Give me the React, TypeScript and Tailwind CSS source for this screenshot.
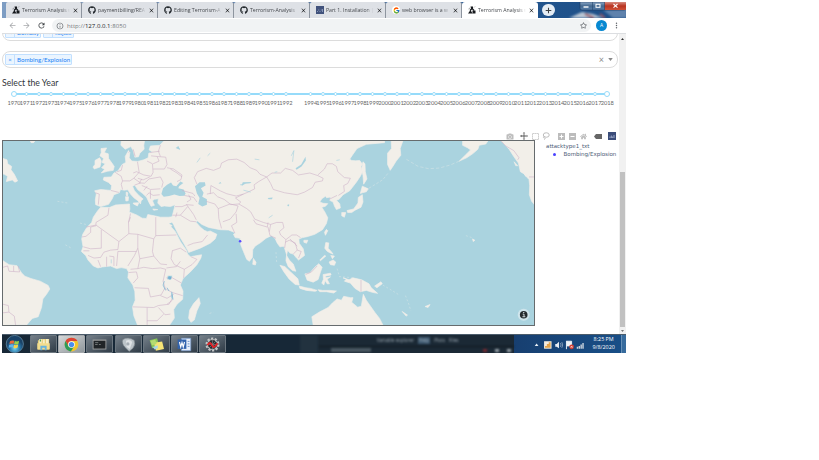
import React from "react";
import { FcGoogle } from "react-icons/fc";
import { FaGithub, FaCamera, FaHome, FaRegStar } from "react-icons/fa";
import { MdClose, MdArrowBack, MdArrowForward, MdRefresh, MdInfoOutline, MdMoreVert } from "react-icons/md";

/* ---------- browser chrome ---------- */

function DashIcon() {
  return (
    <svg viewBox="0 0 16 16" className="h-full w-full">
      <path d="M0 15 5 8l4 7zM9 9h6v6H9zM5 1h5v4l3 3-2 1-3-2-3 3-2-2 3-3z" fill="#16191d" />
      <path d="M1 6l3-2M12 3l2-2" stroke="#444" />
    </svg>
  );
}

function DocsIcon() {
  return (
    <svg viewBox="0 0 16 16" className="h-full w-full">
      <rect width="16" height="16" fill="#41527c" />
      <path d="M3 10v2M5.500 7v2M8 10v2M10.500 7v2M13 6v6" stroke="#aab7d2" strokeWidth="1.400" />
    </svg>
  );
}

const tabs = [
  { title: "Terrorism Analysis w", icon: "dash" },
  { title: "paymentbilling/REA", icon: "github" },
  { title: "Editing Terrorism-A", icon: "github" },
  { title: "Terrorism-Analysis", icon: "github" },
  { title: "Part 1. Installation |", icon: "docs" },
  { title: "web browser is a w", icon: "google" },
  { title: "Terrorism Analysis w", icon: "dash" },
];

function TabIcon({ kind }: { kind: string }) {
  if (kind === "github") return <FaGithub className="h-full w-full text-[#24292e]" />;
  if (kind === "google")
    return (
      <span className="flex h-full w-full items-center justify-center rounded-full bg-white">
        <FcGoogle className="h-[7px] w-[7px]" />
      </span>
    );
  if (kind === "docs") return <DocsIcon />;
  return <DashIcon />;
}

function TabStrip() {
  return (
    <div className="flex h-[16px] w-full overflow-hidden bg-gradient-to-r from-[#7e9dc3] via-[#2d5f9c] to-[#1d4f87]">
      <div className="w-[4px] shrink-0" />
      {tabs.map((t, i) => (
        <div
          key={i}
          className={
            i === 6
              ? "flex h-full w-[76px] shrink-0 items-center rounded-t-[3px] bg-white pl-[6px] pr-[3px]"
              : "flex h-full w-[76px] shrink-0 items-center rounded-t-[2px] border-r border-[#8e959f] bg-[#dee1e6] pl-[6px] pr-[3px]"
          }
        >
          <span className="h-[8px] w-[8px] shrink-0">
            <TabIcon kind={t.icon} />
          </span>
          <span className="ml-[2px] w-[51px] shrink-0 whitespace-nowrap [mask-image:linear-gradient(to_right,#000_78%,transparent_94%)] text-[5.2px] leading-[10px] text-[#45484d]">
            {t.title}
          </span>
          <MdClose className="-ml-[1px] h-[7px] w-[7px] shrink-0 text-[#202124]" />
        </div>
      ))}
      <div className="ml-[4px] mt-[2px] flex h-[12px] w-[13px] shrink-0 items-center justify-center rounded-full bg-[#e6edf5]">
        <svg viewBox="0 0 10 10" className="h-[7px] w-[7px]">
          <path d="M5 1v8M1 5h8" stroke="#3c4043" strokeWidth="1.5" />
        </svg>
      </div>
      <WindowButtons />
    </div>
  );
}

function WindowButtons() {
  return (
    <svg viewBox="0 0 72 16" className="ml-auto h-[16px] w-[72px] shrink-0">
      <defs>
        <linearGradient id="red" x2="0" y2="1">
          <stop stopColor="#d68c80" />
          <stop offset=".5" stopColor="#b93420" />
          <stop offset="1" stopColor="#cf5138" />
        </linearGradient>
        <linearGradient id="steel" x2="0" y2="1">
          <stop stopColor="#8aa6c6" />
          <stop offset=".5" stopColor="#44688f" />
          <stop offset="1" stopColor="#587fab" />
        </linearGradient>
        <filter id="soft">
          <feGaussianBlur stdDeviation="1.3" />
        </filter>
      </defs>
      <g filter="url(#soft)">
        <path d="M14 16 27 10 38 12 48 16z" fill="#b8c5d3" />
        <path d="M48 8 58 16h14V7z" fill="#5e82ac" />
        <path d="M30 12l9 4M45 12l5 4" stroke="#9c5664" strokeWidth="2" />
      </g>
      <path d="M25 0v6q0 2 2 2h42q2 0 2-2V0z" fill="url(#steel)" stroke="#1e3b60" strokeWidth=".6" />
      <path d="M49.500 0v8h20q2 0 2-2V0z" fill="url(#red)" />
      <path d="M37.500 0v8M49.500 0v8" stroke="#24466d" strokeWidth=".6" />
      <path d="M28.500 5h5" stroke="#fff" strokeWidth="1.4" />
      <rect x="41" y="2.3" width="4" height="3" fill="none" stroke="#fff" />
      <path d="m58.500 2 4 3.600m0-3.600-4 3.600" stroke="#fff" strokeWidth="1.1" />
    </svg>
  );
}

function Toolbar() {
  return (
    <div className="flex h-[16px] w-full items-center border-b border-[#dcdee1] bg-white">
      <MdArrowBack className="ml-[6px] h-[9px] w-[9px] text-[#a6a8ab]" />
      <MdArrowForward className="ml-[5px] h-[9px] w-[9px] text-[#a6a8ab]" />
      <MdRefresh className="ml-[6px] h-[9px] w-[9px] text-[#3c4043]" />
      <div className="ml-[6px] flex h-[13px] w-[539px] items-center rounded-full bg-[#f1f3f4] pl-[4px] pr-[4px]">
        <MdInfoOutline className="h-[8px] w-[8px] text-[#5f6368]" />
        <span className="ml-[3px] text-[6.1px] leading-[10px] text-[#76797d]">
          http://<span className="text-[#202124]">127.0.0.1</span>:8050
        </span>
        <FaRegStar className="ml-auto h-[7px] w-[7px] text-[#5f6368]" />
      </div>
      <div className="ml-[5px] flex h-[11px] w-[11px] items-center justify-center rounded-full bg-[#0788d1] text-[5px] text-white">A</div>
      <MdMoreVert className="ml-[5px] h-[9px] w-[9px] text-[#5f6368]" />
    </div>
  );
}

/* ---------- dashboard controls ---------- */

function Tag({ label, width }: { label: string; width: number }) {
  return (
    <span
      className="flex h-[11px] shrink-0 items-center rounded-[1px] border border-[#c2e0ff] bg-[#ebf5ff] text-[6.2px] leading-[9px] text-[#2483f5]"
      style={{ width }}
    >
      <span className="flex h-full w-[9px] items-center justify-center border-r border-[#c2e0ff] text-[6px]">×</span>
      <span className="whitespace-nowrap pl-[2px]">{label}</span>
    </span>
  );
}

function Dropdowns() {
  return (
    <>
      <div className="flex h-[7px] flex-col justify-end overflow-hidden">
        <div className="flex h-[17px] w-[616px] shrink-0 items-center gap-[2px] rounded-[8px] border border-[#dcdcdc] pl-[2px]">
          <Tag label="Bombay" width={36} />
          <Tag label="Rajula" width={31} />
        </div>
      </div>
      <div className="mt-[10px] flex h-[17px] w-[616px] items-center rounded-[8px] border border-[#dcdcdc] pl-[2px] pr-[4px]">
        <Tag label="Bombing/Explosion" width={67} />
        <span className="ml-auto text-[9px] leading-[9px] text-[#8c8c8c]">×</span>
        <svg viewBox="0 0 6 4" className="ml-[4px] h-[3px] w-[5px]">
          <path d="M0 0h6L3 4z" fill="#888" />
        </svg>
      </div>
    </>
  );
}

const years = Array.from({ length: 49 }, (_, i) => 1970 + i);

function YearSlider() {
  return (
    <div className="ml-[5.8px] mt-[1px] flex w-[605.6px]">
      {years.map((y, i) => (
        <div key={y} className="flex w-[12.36px] shrink-0 flex-col items-center">
          <div className="flex h-[8px] w-full items-center">
            <span className={i === 0 ? "h-[1.4px] w-1/2 bg-transparent" : "h-[1.4px] flex-1 bg-[#96dbfa]"} />
            {y !== 1993 && (
              <span
                className={
                  i === 0 || i === 48
                    ? "z-10 -mx-[3px] h-[6.4px] w-[6.4px] shrink-0 rounded-full border border-[#96dbfa] bg-white"
                    : "h-[3.6px] w-[3.6px] shrink-0 rounded-full border-[0.8px] border-[#96dbfa] bg-white"
                }
              />
            )}
            <span className={i === 48 ? "h-[1.4px] w-1/2 bg-transparent" : "h-[1.4px] flex-1 bg-[#96dbfa]"} />
          </div>
          <span className="mt-[1px] h-[8px] whitespace-nowrap text-[5.7px] leading-[8px] text-[#666]">
            {y !== 1993 ? y : ""}
          </span>
        </div>
      ))}
    </div>
  );
}

/* ---------- plot ---------- */

function ModeBar() {
  return (
    <div className="flex h-[8px] items-center pl-[504px]">
      <FaCamera className="h-[7px] w-[8px] text-[#bdbdbd]" />
      <svg viewBox="0 0 16 16" className="ml-[6px] h-[8px] w-[8px]">
        <path d="M8 0 5.5 3h5zM8 16l2.5-3h-5zM0 8l3-2.500v5zM16 8l-3-2.500v5zM7.200 2h1.600v12H7.200zM2 7.200h12v1.600H2z" fill="#555" />
      </svg>
      <svg viewBox="0 0 14 14" className="ml-[4px] h-[7px] w-[7px]">
        <rect x="1" y="1" width="12" height="12" fill="none" stroke="#b5b5b5" strokeWidth="1.7" strokeDasharray="2.500 1.500" />
      </svg>
      <svg viewBox="0 0 16 16" className="ml-[3px] h-[8px] w-[8px]">
        <ellipse cx="8.500" cy="6" rx="6" ry="4.500" fill="none" stroke="#b5b5b5" strokeWidth="1.8" />
        <path d="M5 9c-3 0-3 3 0 3s1 3-1 3" fill="none" stroke="#b5b5b5" strokeWidth="1.600" />
      </svg>
      <svg viewBox="0 0 14 14" className="ml-[8px] h-[7px] w-[7px]">
        <path d="M0 0h14v14H0z" fill="#bcbcbc" />
        <path d="M7 3v8M3 7h8" stroke="#fff" strokeWidth="2" />
      </svg>
      <svg viewBox="0 0 14 14" className="ml-[4px] h-[7px] w-[7px]">
        <path d="M0 0h14v14H0z" fill="#bcbcbc" />
        <path d="M3 7h8" stroke="#fff" strokeWidth="2" />
      </svg>
      <FaHome className="ml-[4px] h-[7px] w-[7px] text-[#bdbdbd]" />
      <svg viewBox="0 0 16 10" className="ml-[7px] h-[5px] w-[8px]">
        <path d="M0 5 4 0h12v10H4z" fill="#666" />
      </svg>
      <svg viewBox="0 0 16 16" className="ml-[6px] h-[8px] w-[8px]">
        <path d="M0 0h16v16H0z" fill="#3b4d7a" />
        <path d="M4 12V9M6.700 12V7M9.400 12V9M12 12V6" stroke="#b9c4e0" strokeWidth="1.500" />
      </svg>
    </div>
  );
}

const WATER = "#aad3df";
const LAND = "#f2efe9";

const mainland =
  "M1155 15 1155 20 1100 25 1072 38 1058 58 1050 70 1056 74 1068 75 1080 74 1088 85 1084 92 1088 110 1082 122 1070 140 1050 166 " +
  "1030 178 1018 192 1010 195 1020 205 1022 218 1010 223 1004 212 1000 200 990 195 993 185 980 187 978 182 966 190 960 200 970 204 984 205 977 213 966 216 975 230 984 248 980 265 968 284 945 298 922 305 908 308 " +
  "897 312 898 325 910 342 914 362 896 376 890 370 880 358 870 355 863 346 860 362 868 376 880 388 888 410 878 408 865 396 858 378 860 360 852 334 840 336 832 325 825 310 814 302 798 310 782 323 765 334 758 345 757 368 748 380 740 374 730 350 722 330 720 310 705 308 700 298 706 294 698 290 685 285 660 284 640 280 625 277 605 268 590 256 588 262 600 276 612 286 622 290 630 288 650 298 645 312 630 325 600 340 565 353 562 346 550 325 535 300 518 266 " +
  "512 275 525 290 540 320 558 346 562 358 570 366 604 360 602 370 590 390 570 412 548 432 540 452 548 470 547 495 530 510 520 526 522 552 508 573 " +
  "411 573 400 545 396 518 404 498 403 472 397 452 382 430 384 412 378 402 362 399 348 402 330 394 305 397 292 400 278 394 262 376 255 362 242 350 247 336 243 312 246 298 258 278 273 262 278 246 290 228 300 216 326 217 345 209 387 206 388 222 386 230 410 240 425 249 438 250 442 238 462 242 480 246 505 246 515 245 522 218 524 208 510 214 492 212 482 214 472 203 474 190 " +
  "462 192 456 196 462 210 452 213 446 202 438 185 425 173 412 163 403 149 396 152 402 166 416 181 428 191 422 196 420 206 412 196 400 187 390 176 382 163 371 164 360 162 356 172 340 178 335 190 324 207 300 214 285 208 284 194 287 175 282 166 300 162 331 165 333 150 324 141 308 133 310 125 332 124 340 112 352 106 365 86 376 80 374 62 384 44 388 50 386 66 394 76 412 77 430 72 443 66 445 52 456 48 446 42 450 30 478 28 490 15Z";

const lands = [
  // Scandinavia, Britain, Ireland, Iceland
  "M362 15 361 28 374 40 391 32 398 44 403 64 414 63 418 52 431 40 430 28 432 15Z",
  "M301 38 318 36 311 50 323 54 324 68 334 82 341 92 338 104 320 107 302 112 312 101 303 96 314 84 304 80 309 68 298 60 302 50Z",
  "M283 74 297 66 302 76 298 94 281 100 277 94 283 86Z",
  "M88 15 102 15 98 20 91 20Z",
  // Newfoundland, Brazil
  "M6 68 18 72 20 84 32 92 30 102 40 116 50 136 42 140 34 133 16 138 20 122 10 116 6 115Z",
  "M6 378 24 390 48 393 62 415 72 425 90 432 118 440 142 453 147 464 137 480 126 494 122 520 112 548 94 553 78 572 6 573Z",
  // Mediterranean islands
  "M377 170 382 172 381 182 377 180ZM375 184 384 184 383 196 376 197ZM398 203 415 202 411 212 399 206ZM457 221 472 223 460 225Z",
  // Madagascar, Sri Lanka
  "M596 490 600 508 590 530 582 558 572 565 565 552 568 528 580 508 590 497ZM760 371 768 383 766 391 758 389Z",
  // Sumatra, Java
  "M840 392 855 396 872 412 894 433 898 452 886 450 868 434 852 412ZM898 455 918 460 932 462 952 468 946 471 920 468 900 462ZM955 466 968 468 990 468 1010 470 1002 476 980 472 960 472Z",
  // Borneo, Sulawesi
  "M915 418 930 415 945 398 957 387 967 398 962 412 955 435 940 443 922 437Z",
  "M970 420 992 416 994 421 976 425 979 430 992 427 982 434 989 448 982 448 976 438 972 452 966 446 971 434Z",
  // Philippines, Taiwan, Hainan
  "M978 323 987 324 985 340 994 350 1000 358 990 354 982 349 975 340ZM993 362 1004 364 998 372ZM988 382 1000 376 1008 382 1004 392 992 390ZM974 362 960 376 962 378 978 364ZM980 283 984 287 977 301 974 292ZM912 316 924 316 920 325 912 322Z",
  // New Guinea
  "M1030 430 1048 436 1060 430 1086 436 1108 448 1115 460 1134 477 1118 474 1100 468 1082 472 1066 462 1052 446 1034 440 1040 434ZM1125 455 1144 442 1148 448 1132 460Z",
  // Australia
  "M940 573 936 548 960 533 985 520 998 506 1012 494 1025 498 1032 486 1052 490 1060 490 1056 504 1074 519 1085 516 1091 480 1100 498 1110 512 1126 535 1140 553 1150 573Z",
  // Japan, Sakhalin, Kamchatka
  "M1026 232 1038 232 1034 246 1026 242ZM1042 226 1062 221 1075 203 1076 186 1088 178 1090 200 1084 216 1066 225 1056 232 1044 232Z",
  "M1082 174 1088 152 1106 160 1100 169 1088 172ZM1090 78 1096 84 1097 108 1102 130 1092 146 1090 120 1086 100Z",
  "M1175 15 1210 15 1202 38 1204 58 1190 76 1180 92 1172 104 1164 86 1164 52 1176 38Z",
  // Alaska and the western coast of North America
  "M1390 15 1466 15 1460 24 1440 28 1436 40 1420 54 1402 66 1380 76 1398 58 1414 42 1406 36 1390 28Z",
  "M1506 15 1608 15 1608 210 1598 198 1591 178 1592 150 1590 132 1574 114 1564 108 1558 82 1544 62 1530 40Z",
  "M1545 78 1556 90 1550 90ZM1570 105 1586 120 1580 122Z",
  // Hawaii, Fiji, New Caledonia
  "M1420 312 1427 316 1422 320ZM1277 517 1292 511 1286 520ZM1208 532 1224 543 1220 546Z",
];

const lakes = [
  "M483 176 488 158 500 148 512 141 518 150 528 152 540 138 549 142 536 152 534 158 550 162 556 174 552 181 538 182 522 177 506 182 490 184Z",
  "M584 152 598 140 614 140 616 150 602 158 610 172 606 184 620 192 620 208 606 214 594 206 598 188 590 174Z",
  "M917 63 918 74 905 92 890 102 887 98 904 86Z",
  "M728 140 754 139 750 143 734 145 724 152ZM540 42 534 30 526 36ZM803 188 818 186 816 192 806 192ZM864 207 868 208 867 213 862 212ZM502 424 516 424 512 436 500 434ZM655 145 660 139 664 143Z",
  "M488 445 492 460 496 470 491 462ZM514 474 518 484 516 498 511 486ZM506 266 515 262 520 272Z",
];

const borders =
  // Europe
  "M284 172 296 176 293 208M331 165 355 171M344 110 362 122 366 136 362 146 366 162M366 136 388 136 400 128 416 110 411 78M366 88 362 104 350 108M400 128 420 142 402 149M398 112 408 108 430 118 452 122 458 110 456 84 440 76M412 128 428 133 448 124M415 142 432 143 446 130 480 124 488 140 484 156M424 150 436 155 450 162 480 160M430 165 440 152M438 180 446 172 458 180 478 178M450 164 450 190M424 130 418 140M452 60 470 62 476 76 458 84M470 62 496 64 500 86 492 100 458 100M448 50 478 46M480 28 474 46 480 62 M500 96 520 100 545 118 542 132 530 138M388 46 384 50M404 62 398 40" +
  // Africa
  "M325 218 322 240 286 262 286 270 256 276M286 270 355 320 385 296 384 262 390 235M286 272 270 276 270 292 256 304 244 306M302 284 302 340 270 342 248 336M355 320 352 344 330 346 310 352 300 368 280 370 262 362M248 348 266 348M385 296 412 298 412 340 402 362 382 394M390 246 384 262M412 298 460 312 466 302 466 246M466 302 528 300M460 312 456 350 460 364 480 388 500 390M348 394 352 350 M352 350 408 350M340 394 340 366 326 364M318 396 318 366M300 396 292 376M412 340 418 372 412 402 390 404M418 372 460 364M412 402 430 398 456 402 480 400 496 404 488 440 494 460 482 482 450 488 444 462 402 460M384 414 408 412 412 430 398 446M498 400 528 396 540 380 M498 430 516 430 544 446M494 462 514 474 547 484M480 484 500 492 520 480M396 518 460 520 474 514 506 510 516 492M440 520 440 573M474 520 494 542 510 540M440 560 470 560 490 540M500 510 516 498M515 348 540 340 558 352M516 348 512 372 522 390 552 404 575 390 590 374 572 366M552 404 550 430" +
  // Middle East and Central Asia
  "M524 214 545 214 560 208 580 210M516 240 540 240 562 214M540 240 570 258 588 260M558 207 580 238 588 254M562 332 580 325 606 320 622 300M526 246 530 232M552 180 580 186 590 200M545 165 578 174 584 182M565 178 572 192 560 200M590 146 582 126 592 108 618 98 640 104 660 96 664 82 684 72 710 70 732 80 750 96 770 104 780 116 800 124 776 138 762 148 764 160 744 170 730 176 708 182 680 175 660 166 632 150 630 176M620 176 640 172 652 184 672 192 692 208 716 206 722 200 706 188 730 176M618 198 644 206 654 220 656 250 664 280M654 220 690 206 714 212 708 230 690 252 668 260M716 206 740 220 752 230 764 252 790 262 812 268 830 262M708 236 710 262 694 272 704 294M760 254 768 266 802 276 804 262M804 276 810 302 828 310M812 268 808 290M830 262 848 262 852 278 838 290 842 300 858 314 854 340M858 314 876 300 890 300 902 308M856 322 868 316 886 324 892 346 880 358M892 346 904 350 896 370M870 312 892 334" +
  // China, Mongolia, Korea
  "M800 124 816 112 842 112 856 98 878 104 896 118 930 112 954 120 970 128 968 136 946 140 938 156 914 170 892 178 854 172 820 162 812 144 800 124M954 118 974 100 982 84 998 84 1010 92 1014 108 1034 126 1052 128 1044 144 1032 150 1034 168 1016 180M988 192 1012 180" +
  // Insular Asia, the Americas
  "M917 420 935 412 952 394M1084 436 1084 472M6 398 20 394 24 410 56 412 52 394M38 394 38 410M6 510 22 514 24 534 40 546 44 573M6 536 24 534M1506 15 1520 30 1544 44 1560 66 1556 72M1590 124 1608 124M510 100 530 112 545 124";

function WorldMap() {
  return (
    <svg viewBox="6 15 1599 558" preserveAspectRatio="none" className="block h-[184px] w-[531px]">
      <path d="M6 15h1599v558H6z" fill={WATER} />
      <g fill={LAND} stroke={LAND} strokeWidth="2" strokeLinejoin="round">
        <path d={mainland} />
        {lands.map((d) => (
          <path key={d} d={d} />
        ))}
      </g>
      <g fill={WATER}>
        {lakes.map((d) => (
          <path key={d} d={d} />
        ))}
      </g>
      <g fill="none" stroke={LAND} strokeWidth="2" opacity=".5">
        <path d="M1108 158 1128 146 1150 132 1166 112" strokeDasharray="8 5" />
        <path d="M1380 76 1352 88 1320 97 1288 99 1256 92 1220 70" strokeDasharray="10 6" />
        <path d="M1150 452 1180 470 1196 480M1218 484 1228 510 1234 530M1400 302 1418 308M170 198 200 203M238 264 256 268M194 330 212 340M628 538 640 534M828 352 830 382M1060 430 1020 426M1012 402 1020 428" strokeDasharray="6 6" />
      </g>
      <path d={borders} fill="none" stroke="#cdb2c8" strokeOpacity=".8" strokeWidth="2.200" strokeLinejoin="round" />
      <g fill="none" stroke={WATER} strokeWidth="2">
        <path d="M590 80 600 66M622 60 630 52M764 70 778 72M874 60 882 44 878 78M730 164 752 170M806 248 818 240M824 110 832 108M720 148 736 144M1010 74 1020 72M532 36 538 38M332 386 332 374" />
        <path d="M500 460 506 470M492 440 488 452 496 468M514 472 518 496" stroke="#76b4d4" />
      </g>
      <circle cx="508" cy="430" r="5" fill="#76b4d4" />
      <circle cx="720" cy="319" r="3.800" fill="#5a4cff" />
      <circle cx="1574" cy="542" r="18" fill="#cfe5ec" />
      <circle cx="1574" cy="542" r="11.500" fill="#252b2e" />
      <path d="M1571 540h4v8M1570 548h9M1572 535h4" stroke="#e4eff2" strokeWidth="2.600" fill="none" />
    </svg>
  );
}

function Plot() {
  return (
    <div className="flex">
      <div className="h-[186px] w-[533px] shrink-0 border border-[#666b6d]">
        <WorldMap />
      </div>
      <div className="pl-[11px] pt-[1.500px] font-['DejaVu_Sans',sans-serif] text-[5.530px] leading-[8.800px] text-[#4c5c76]">
        <div className="whitespace-nowrap">attacktype1_txt</div>
        <div className="flex items-center whitespace-nowrap">
          <span className="ml-[7px] mr-[8px] h-[2.500px] w-[2.500px] rounded-full bg-[#4a42ff]" />
          Bombing/Explosion
        </div>
      </div>
    </div>
  );
}

function Scrollbar() {
  return (
    <div className="flex w-[7px] shrink-0 flex-col items-center bg-[#f1f1f1]">
      <svg viewBox="0 0 6 4" className="mt-[4px] h-[2px] w-[3px]">
        <path d="M0 4h6L3 0z" fill="#333" />
      </svg>
      <div className="mt-[132px] h-[155px] w-[5px] bg-[#c1c1c1]" />
      <svg viewBox="0 0 6 4" className="mt-[3px] h-[2px] w-[3px]">
        <path d="M0 0h6L3 4z" fill="#777" />
      </svg>
    </div>
  );
}

/* ---------- taskbar ---------- */

const taskIcons: React.ReactNode[] = [
  <g key="files">
    <path d="M3 5h4l1-2h13v17H3z" fill="#e7cf7c" />
    <path d="M5 3h4v8H5zM11 4h3v7h-3zM16 3h4v8h-4z" fill="#f5efc8" />
    <path d="M2 10h20v10H2z" fill="#f3dd8c" />
    <path d="M7 14h10v7h-3v-4h-4v4H7z" fill="#69b4dd" />
    <path d="M6 4h2v3H6z" fill="#4fa35a" />
  </g>,
  <g key="chrome">
    <circle cx="12" cy="12" r="11" fill="#f4c52c" />
    <path d="M2.500 6.500A11 11 0 0 1 21.500 6.500H12a5.500 5.500 0 0 0-4.800 8.200z" fill="#dc4437" />
    <path d="M2.500 6.500A11 11 0 0 0 11 23l5-8a5.500 5.500 0 0 1-8.800-.3z" fill="#2e9b58" />
    <circle cx="12" cy="12" r="5.300" fill="#fff" />
    <circle cx="12" cy="12" r="4.200" fill="#4a8df0" />
  </g>,
  <g key="console">
    <path d="M1 4h22v16H1z" fill="#9a9c9d" />
    <path d="M2.500 6h19v12.500h-19z" fill="#202427" />
    <path d="M5 9h5M5 12h4M11 12h3" stroke="#a0a3a4" />
  </g>,
  <g key="shield">
    <path d="M3 4q8-5 18 1 3 7-2 13l-6 5-6-6Q0 10 3 4z" fill="#bcc4c9" stroke="#768087" />
    <path d="M8 6q6-3 10 2l-4 11-5-3z" fill="#dee2e5" />
    <circle cx="11" cy="11" r="2.600" fill="#a5adb4" />
  </g>,
  <g key="notes">
    <path d="m1 5 12-3 3 12-11 4z" fill="#87c558" />
    <path d="m8 9 13-2 3 12-13 3z" fill="#f6e476" />
    <path d="m2 6 8-2 2 7-7 2z" fill="#b4db72" />
    <path d="m6 16 8-3v5l-5 2z" fill="#a6d6e8" />
  </g>,
  <g key="word">
    <path d="M7 2h15v20H7z" fill="#e5eefb" stroke="#668fc7" />
    <path d="M1 4h14v15H1z" fill="#3163ad" />
    <path d="m4 8 2 8 2-7 2 7 2-8" stroke="#fff" strokeWidth="1.800" fill="none" />
    <path d="M17 7h3M17 11h3M17 15h3" stroke="#668fc7" strokeWidth="1.500" />
  </g>,
  <g key="spyder">
    <circle cx="12" cy="12" r="9.500" stroke="#c3c5c6" strokeWidth="3.500" strokeDasharray="3.500 2.400" fill="none" />
    <circle cx="12" cy="12" r="8" fill="#292c30" stroke="#c3c5c6" strokeWidth="1.500" />
    <path d="M12 4v16M4 12h16M6 6l12 12M18 6 6 18" stroke="#9da1a4" strokeWidth=".8" />
    <path d="M4 13q4-7 7 0t9-3" stroke="#e12126" strokeWidth="3" fill="none" />
  </g>,
];

function StartOrb() {
  return (
    <svg viewBox="0 0 28 18" className="h-[18px] w-[28px] shrink-0">
      <defs>
        <radialGradient id="orb" cy=".75">
          <stop stopColor="#7bd5ee" />
          <stop offset=".6" stopColor="#2774a8" />
          <stop offset="1" stopColor="#1a4368" />
        </radialGradient>
      </defs>
      <circle cx="12.800" cy="9" r="8.600" fill="url(#orb)" stroke="#75a3bd" strokeWidth=".6" />
      <path d="M8 6.300q2-1.500 4.200-.5l-.6 3q-2-.8-4.200.3z" fill="#ee6a37" />
      <path d="M12.800 6.100q2 .9 4.300-.3l-.7 3.100q-2 1-4.200.2z" fill="#9bd245" />
      <path d="M7.200 9.800q2-1 4.200-.3l-.6 3q-2-.8-4.100.2z" fill="#60b4ed" />
      <path d="M12 9.800q2 .8 4.200-.2l-.6 3q-2 1-4.200.2z" fill="#fad347" />
    </svg>
  );
}

function Taskbar() {
  return (
    <div className="flex h-[19px] w-full items-stretch overflow-hidden border-t border-[#4b5c6b] bg-[#172837]">
      <StartOrb />
      <div className="flex shrink-0 gap-[1.200px]">
        {taskIcons.map((icon, i) => (
          <div
            key={i}
            className={
              i === 1
                ? "flex w-[27px] items-center justify-center rounded-[1px] border border-[#a3a7ab] bg-gradient-to-br from-[#d6d8d9] to-[#8f979c]"
                : "flex w-[27px] items-center justify-center rounded-[1px] border border-[#6b767f] bg-gradient-to-br from-[#75808a] to-[#303c47]"
            }
          >
            <svg viewBox="0 0 24 24" className="h-[15px] w-[15px]">
              {icon}
            </svg>
          </div>
        ))}
      </div>
      <div className="ml-[74px] h-full w-[18px] shrink-0 bg-[#22323f] blur-[1px]" />
      <div className="flex h-full w-[196px] shrink-0 flex-col bg-[#1b2935]">
        <div className="flex h-[11px] items-center justify-center gap-[4px] pl-[3px] text-[4.700px] leading-[7px] text-[#a3afb9] blur-[0.8px]">
          <span>Variable explorer</span>
          <span className="bg-[#3c5870] px-[1px]">Help</span>
          <span>Plots</span>
          <span>Files</span>
        </div>
        <div className="ml-[1px] flex h-[7px] items-center border-t border-[#10191f] pl-[12px] pr-[3px] blur-[0.8px]">
          <span className="h-[4px] w-[40px] bg-[#4a5862]" />
          <span className="ml-auto h-[3px] w-[4px] bg-[#782830]" />
          <span className="ml-[8px] h-[3px] w-[4px] bg-[#9aa4ab]" />
          <span className="ml-[8px] h-[3px] w-[4px] bg-[#9aa4ab]" />
        </div>
      </div>
      <div className="flex flex-1 items-center bg-gradient-to-r from-[#173f70] to-[#184f88]">
        <svg viewBox="0 0 60 17" className="ml-[17px] h-[17px] w-[56px] shrink-0">
          <path d="M4 10h4L6 7.500z" fill="#eef4fa" />
          <path d="M14 5h8v8h-8z" fill="#f6eddf" />
          <path d="M15 12v-2h2V8h2V6h2v6z" fill="#e2a24a" />
          <path d="M26 8h1.500L30 5.500v7L27.500 11H26z" fill="#e8edf3" />
          <path d="M31.500 7q1.500 2 0 4M33 6q2 3 0 6" fill="none" stroke="#b7c6d8" strokeWidth=".7" />
          <path d="M38 4.500v9M38.500 5h5v5h-5z" stroke="#edf2f8" fill="#edf2f8" />
          <circle cx="43.500" cy="11" r="2.500" fill="#d43c31" />
          <path d="m42.500 10 2 2m0-2-2 2" stroke="#fff" strokeWidth=".7" />
          <path d="M49 13h1.500v-2H49zM51 13h1.500v-3H51zM53 13h1.500V8.500H53zM55 13h1.500V7H55z" fill="#cbd5df" />
        </svg>
        <div className="ml-[5px] w-[23px] shrink-0 text-center text-[5.400px] leading-[7.800px] whitespace-nowrap text-white">
          <div>8:25 PM</div>
          <div>9/8/2020</div>
        </div>
        <div className="ml-auto h-full w-[5px] border-l border-[#6790b7] bg-[#376b9d]" />
      </div>
    </div>
  );
}

export default function App() {
  return (
    <main className="h-[460px] w-[819px] overflow-hidden bg-white pl-[2px] pt-[2px] font-['Open_Sans','Noto_Sans',sans-serif]">
      <div className="w-[624px]">
        <TabStrip />
        <Toolbar />
        <div className="flex h-[300px]">
          <div className="w-[617px] shrink-0 font-['Lato','Liberation_Sans',sans-serif]">
            <Dropdowns />
            <h1 className="mt-[9px] h-[12px] text-[8.700px] leading-[12px] text-[#32363a]">Select the Year</h1>
            <YearSlider />
            <div className="h-[25px]" />
            <ModeBar />
            <Plot />
          </div>
          <Scrollbar />
        </div>
        <Taskbar />
      </div>
    </main>
  );
}
